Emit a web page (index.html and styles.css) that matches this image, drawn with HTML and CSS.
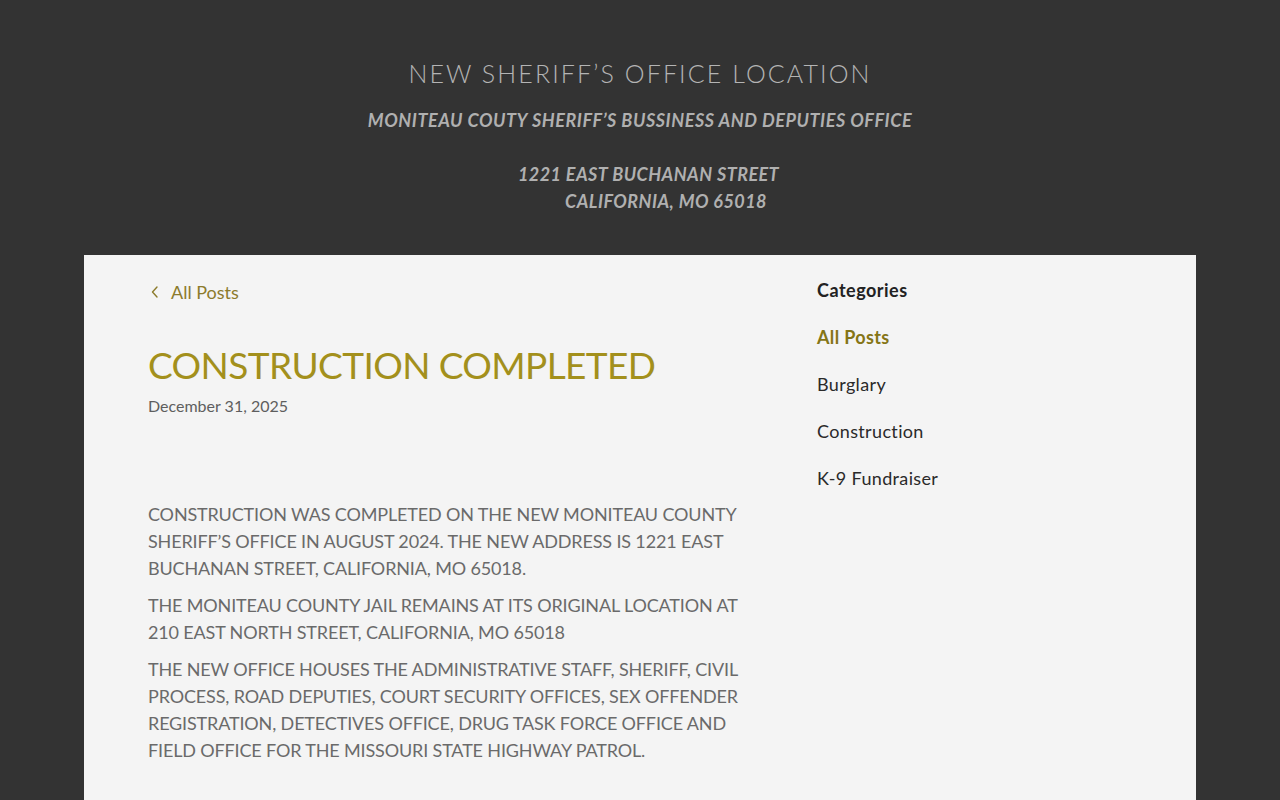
FILE: index.html
```html
<!DOCTYPE html>
<html lang="en">
<head>
<meta charset="utf-8">
<title>New Sheriff's Office Location</title>
<link rel="stylesheet" href="styles.css">
</head>
<body>
<header class="hero">
  <h1 class="hero-title">NEW SHERIFF’S OFFICE LOCATION</h1>
  <p class="hero-sub">MONITEAU COUTY SHERIFF’S BUSSINESS AND DEPUTIES OFFICE</p>
  <p class="hero-addr"><span class="addr-1">1221 EAST BUCHANAN STREET</span><span class="addr-2">CALIFORNIA, MO 65018</span></p>
</header>
<main class="card">
  <article class="post">
    <a class="back" href="#"><svg class="chev" width="10" height="14" viewBox="0 0 10 14"><path d="M7 2 L2.5 7 L7 12" fill="none" stroke="currentColor" stroke-width="1.4" stroke-linecap="round" stroke-linejoin="round"/></svg>All Posts</a>
    <h2 class="post-title">CONSTRUCTION COMPLETED</h2>
    <div class="post-date">December 31, 2025</div>
    <div class="post-body">
      <p>CONSTRUCTION WAS COMPLETED ON THE NEW MONITEAU COUNTY SHERIFF’S OFFICE IN AUGUST 2024. THE NEW ADDRESS IS 1221 EAST BUCHANAN STREET, CALIFORNIA, MO 65018.</p>
      <p>THE MONITEAU COUNTY JAIL REMAINS AT ITS ORIGINAL LOCATION AT 210 EAST NORTH STREET, CALIFORNIA, MO 65018</p>
      <p>THE NEW OFFICE HOUSES THE ADMINISTRATIVE STAFF, SHERIFF, CIVIL PROCESS, ROAD DEPUTIES, COURT SECURITY OFFICES, SEX OFFENDER REGISTRATION, DETECTIVES OFFICE, DRUG TASK FORCE OFFICE AND FIELD OFFICE FOR THE MISSOURI STATE HIGHWAY PATROL.</p>
    </div>
  </article>
  <aside class="sidebar">
    <h3 class="side-title">Categories</h3>
    <ul class="cats">
      <li class="cat active">All Posts</li>
      <li class="cat">Burglary</li>
      <li class="cat">Construction</li>
      <li class="cat">K-9 Fundraiser</li>
    </ul>
  </aside>
</main>
</body>
</html>
```
FILE: styles.css
```css
* { box-sizing: border-box; }
html, body { margin: 0; padding: 0; }
body {
  background: #333333;
  font-family: "Lato", "Noto Sans", sans-serif;
  color: #555;
  height: 800px;
  overflow: hidden;
}
.hero {
  text-align: center;
  padding-top: 57px;
  height: 255px;
}
.hero-title {
  margin: 0;
  font-weight: 300;
  font-size: 25px;
  letter-spacing: 2.1px;
  line-height: 32px;
  color: #b4b4b4;
}
.hero-sub {
  margin: 18px 0 0;
  font-size: 18px;
  font-weight: 700;
  font-style: italic;
  letter-spacing: 0.55px;
  color: #b0b0b0;
  line-height: 27px;
}
.hero-addr {
  margin: 27px 0 0;
  font-size: 18px;
  font-weight: 700;
  font-style: italic;
  letter-spacing: 0.45px;
  color: #b0b0b0;
  line-height: 27px;
  display: flex;
  flex-direction: column;
  align-items: center;
}
.addr-1 { padding-left: 17px; }
.addr-2 { padding-left: 52px; }
.card {
  margin: 0 84px;
  background: #f4f4f4;
  min-height: 545px;
  display: flex;
  padding: 22px 64px 0;
}
.post {
  width: 620px;
  flex: none;
}
.back {
  display: inline-flex;
  align-items: center;
  gap: 11px;
  padding-left: 2px;
  color: #8c7b2c;
  text-decoration: none;
  font-size: 18px;
  line-height: 30px;
}
.chev { display: block; }
.post-title {
  margin: 36px 0 0;
  font-weight: 400;
  font-size: 37px;
  letter-spacing: -0.6px;
  line-height: 44px;
  color: #a3901c;
}
.post-date {
  margin-top: 7px;
  font-size: 16px;
  line-height: 24px;
  color: #5e5e5e;
}
.post-body {
  margin-top: 83px;
  font-size: 18px;
  line-height: 27px;
  letter-spacing: -0.15px;
  color: #6a6a6a;
}
.post-body p { margin: 0 0 10px; }
.sidebar {
  margin-left: 49px;
  width: 300px;
}
.side-title {
  margin: 0;
  font-size: 18px;
  font-weight: 700;
  letter-spacing: 0.5px;
  color: #222;
  line-height: 26px;
}
.cats {
  list-style: none;
  margin: 21px 0 0;
  padding: 0;
}
.cat {
  font-size: 18px;
  line-height: 26px;
  letter-spacing: 0.35px;
  color: #2a2a2a;
  margin-bottom: 21px;
}
.cat.active { color: #857516; font-weight: 700; }
```
